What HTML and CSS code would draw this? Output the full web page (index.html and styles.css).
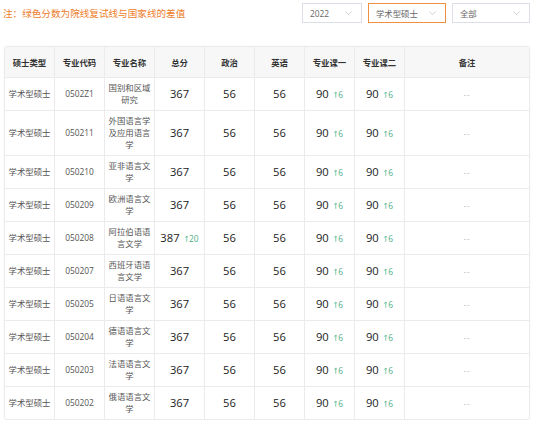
FILE: index.html
```html
<!DOCTYPE html>
<html lang="zh-CN">
<head>
<meta charset="utf-8">
<title>复试线</title>
<link rel="stylesheet" href="styles.css">
</head>
<body>
<div class="page">
  <div class="toolbar">
    <p class="note">注：绿色分数为院线复试线与国家线的差值</p>
    <div class="filters">
      <div class="select select-year"><span>2022</span><svg class="chev" viewBox="0 0 8 5"><polyline points="0.5,0.5 4,4.2 7.5,0.5"/></svg></div>
      <div class="select select-active"><span>学术型硕士</span><svg class="chev" viewBox="0 0 8 5"><polyline points="0.5,0.5 4,4.2 7.5,0.5"/></svg></div>
      <div class="select"><span>全部</span><svg class="chev" viewBox="0 0 8 5"><polyline points="0.5,0.5 4,4.2 7.5,0.5"/></svg></div>
    </div>
  </div>
  <div class="table-wrap">
    <table>
      <thead>
        <tr>
          <th class="c">硕士类型</th><th class="c">专业代码</th><th class="c">专业名称</th><th class="c">总分</th><th class="c">政治</th><th class="c">英语</th><th class="c">专业课一</th><th class="c">专业课二</th><th>备注</th>
        </tr>
      </thead>
      <tbody>
        <tr><td>学术型硕士</td><td>0502Z1</td><td>国别和区域研究</td><td class="num">367</td><td class="num">56</td><td class="num">56</td><td class="num">90<span class="up"><svg class="arr" viewBox="0 0 4 8"><path d="M2 7.5V1M0.4 2.8L2 0.8L3.6 2.8"/></svg>6</span></td><td class="num">90<span class="up"><svg class="arr" viewBox="0 0 4 8"><path d="M2 7.5V1M0.4 2.8L2 0.8L3.6 2.8"/></svg>6</span></td><td class="rem">--</td></tr>
        <tr><td>学术型硕士</td><td>050211</td><td>外国语言学及应用语言学</td><td class="num">367</td><td class="num">56</td><td class="num">56</td><td class="num">90<span class="up"><svg class="arr" viewBox="0 0 4 8"><path d="M2 7.5V1M0.4 2.8L2 0.8L3.6 2.8"/></svg>6</span></td><td class="num">90<span class="up"><svg class="arr" viewBox="0 0 4 8"><path d="M2 7.5V1M0.4 2.8L2 0.8L3.6 2.8"/></svg>6</span></td><td class="rem">--</td></tr>
        <tr><td>学术型硕士</td><td>050210</td><td>亚非语言文学</td><td class="num">367</td><td class="num">56</td><td class="num">56</td><td class="num">90<span class="up"><svg class="arr" viewBox="0 0 4 8"><path d="M2 7.5V1M0.4 2.8L2 0.8L3.6 2.8"/></svg>6</span></td><td class="num">90<span class="up"><svg class="arr" viewBox="0 0 4 8"><path d="M2 7.5V1M0.4 2.8L2 0.8L3.6 2.8"/></svg>6</span></td><td class="rem">--</td></tr>
        <tr><td>学术型硕士</td><td>050209</td><td>欧洲语言文学</td><td class="num">367</td><td class="num">56</td><td class="num">56</td><td class="num">90<span class="up"><svg class="arr" viewBox="0 0 4 8"><path d="M2 7.5V1M0.4 2.8L2 0.8L3.6 2.8"/></svg>6</span></td><td class="num">90<span class="up"><svg class="arr" viewBox="0 0 4 8"><path d="M2 7.5V1M0.4 2.8L2 0.8L3.6 2.8"/></svg>6</span></td><td class="rem">--</td></tr>
        <tr><td>学术型硕士</td><td>050208</td><td>阿拉伯语语言文学</td><td class="num">387<span class="up"><svg class="arr" viewBox="0 0 4 8"><path d="M2 7.5V1M0.4 2.8L2 0.8L3.6 2.8"/></svg>20</span></td><td class="num">56</td><td class="num">56</td><td class="num">90<span class="up"><svg class="arr" viewBox="0 0 4 8"><path d="M2 7.5V1M0.4 2.8L2 0.8L3.6 2.8"/></svg>6</span></td><td class="num">90<span class="up"><svg class="arr" viewBox="0 0 4 8"><path d="M2 7.5V1M0.4 2.8L2 0.8L3.6 2.8"/></svg>6</span></td><td class="rem">--</td></tr>
        <tr><td>学术型硕士</td><td>050207</td><td>西班牙语语言文学</td><td class="num">367</td><td class="num">56</td><td class="num">56</td><td class="num">90<span class="up"><svg class="arr" viewBox="0 0 4 8"><path d="M2 7.5V1M0.4 2.8L2 0.8L3.6 2.8"/></svg>6</span></td><td class="num">90<span class="up"><svg class="arr" viewBox="0 0 4 8"><path d="M2 7.5V1M0.4 2.8L2 0.8L3.6 2.8"/></svg>6</span></td><td class="rem">--</td></tr>
        <tr><td>学术型硕士</td><td>050205</td><td>日语语言文学</td><td class="num">367</td><td class="num">56</td><td class="num">56</td><td class="num">90<span class="up"><svg class="arr" viewBox="0 0 4 8"><path d="M2 7.5V1M0.4 2.8L2 0.8L3.6 2.8"/></svg>6</span></td><td class="num">90<span class="up"><svg class="arr" viewBox="0 0 4 8"><path d="M2 7.5V1M0.4 2.8L2 0.8L3.6 2.8"/></svg>6</span></td><td class="rem">--</td></tr>
        <tr><td>学术型硕士</td><td>050204</td><td>德语语言文学</td><td class="num">367</td><td class="num">56</td><td class="num">56</td><td class="num">90<span class="up"><svg class="arr" viewBox="0 0 4 8"><path d="M2 7.5V1M0.4 2.8L2 0.8L3.6 2.8"/></svg>6</span></td><td class="num">90<span class="up"><svg class="arr" viewBox="0 0 4 8"><path d="M2 7.5V1M0.4 2.8L2 0.8L3.6 2.8"/></svg>6</span></td><td class="rem">--</td></tr>
        <tr><td>学术型硕士</td><td>050203</td><td>法语语言文学</td><td class="num">367</td><td class="num">56</td><td class="num">56</td><td class="num">90<span class="up"><svg class="arr" viewBox="0 0 4 8"><path d="M2 7.5V1M0.4 2.8L2 0.8L3.6 2.8"/></svg>6</span></td><td class="num">90<span class="up"><svg class="arr" viewBox="0 0 4 8"><path d="M2 7.5V1M0.4 2.8L2 0.8L3.6 2.8"/></svg>6</span></td><td class="rem">--</td></tr>
        <tr><td>学术型硕士</td><td>050202</td><td>俄语语言文学</td><td class="num">367</td><td class="num">56</td><td class="num">56</td><td class="num">90<span class="up"><svg class="arr" viewBox="0 0 4 8"><path d="M2 7.5V1M0.4 2.8L2 0.8L3.6 2.8"/></svg>6</span></td><td class="num">90<span class="up"><svg class="arr" viewBox="0 0 4 8"><path d="M2 7.5V1M0.4 2.8L2 0.8L3.6 2.8"/></svg>6</span></td><td class="rem">--</td></tr>
      </tbody>
    </table>
  </div>
</div>
</body>
</html>
```

FILE: styles.css
```css
* { box-sizing: border-box; }

body {
  margin: 0;
  background: #fff;
  font-family: "Open Sans", "Noto Sans CJK SC", sans-serif;
}

.page {
  padding: 3px 4px 0 3px;
}

.toolbar {
  display: flex;
  justify-content: space-between;
  align-items: center;
  height: 20px;
}

.note {
  margin: 0;
  font-family: "Noto Sans CJK SC", sans-serif;
  font-size: 9.6px;
  line-height: 20px;
  color: #ee7d2a;
}

.filters {
  display: flex;
  gap: 6px;
}

.select {
  width: 78px;
  height: 20px;
  border: 1px solid #dcdfe6;
  display: flex;
  align-items: center;
  justify-content: space-between;
  padding: 0 9px 0 7px;
  font-family: "Open Sans", "Noto Sans CJK SC", sans-serif;
  font-size: 8.4px;
  color: #666;
}

.select-year { width: 60px; }
.select-active { border-color: #f0903e; }

.chev {
  width: 7px;
  height: 4.5px;
  fill: none;
  stroke: #c0c4cc;
  stroke-width: 0.9;
}

.table-wrap {
  margin: 23px 0 0 1px;
  width: 526px;
  border: 1px solid #ebebeb;
  border-radius: 3px;
  overflow: hidden;
  box-shadow: 0 0 2px rgba(0, 0, 0, 0.06);
}

table {
  width: 524px;
  border-collapse: separate;
  border-spacing: 0;
  table-layout: fixed;
}

th, td {
  border-right: 1px solid #ebebeb;
  border-bottom: 1px solid #ebebeb;
  text-align: center;
  vertical-align: middle;
  padding: 4px 3px;
  line-height: 12px;
  font-size: 8.4px;
  color: #555;
  font-weight: normal;
  font-family: "Open Sans", "Noto Sans CJK SC", sans-serif;
}

th {
  background: #f7f7f7;
  color: #333;
  font-weight: bold;
  padding: 9px 2px;
  font-family: "Noto Sans CJK SC", sans-serif;
}

th.c { width: 50px; }

th:last-child, td:last-child { border-right: none; }
tbody tr:last-child td { border-bottom: none; }

td.num {
  font-size: 11.2px;
  color: #222;
}

.up {
  font-size: 8.4px;
  color: #4fb088;
  margin-left: 5px;
}

.arr {
  width: 3.5px;
  height: 7.5px;
  margin-right: 1px;
  fill: none;
  stroke: #4fb088;
  stroke-width: 0.8;
  vertical-align: -0.5px;
}

td.rem {
  color: #aaa;
  font-size: 8px;
  letter-spacing: 1px;
}
```
